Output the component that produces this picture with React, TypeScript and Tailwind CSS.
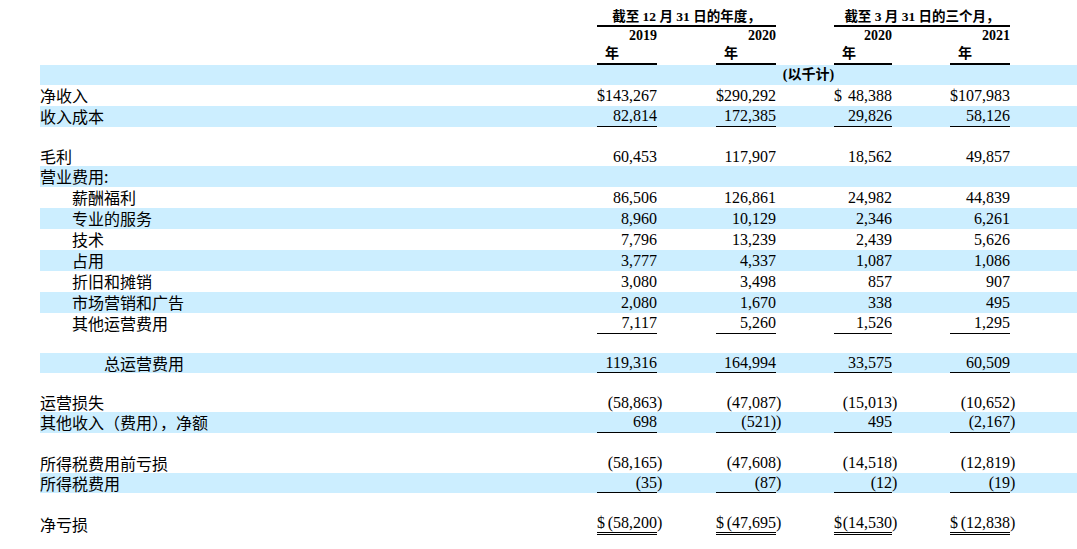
import React from 'react';

type Val = { v: string; d?: boolean; p?: string };

interface RowData {
  label?: string;
  indent?: 0 | 1 | 2;
  h: number;
  blue?: boolean;
  line?: 'single' | 'double';
  vals?: Val[];
}

const GRID = 'grid grid-cols-[557px_60px_59px_60px_58px_58px_58px_60px_10px]';
const SERIF = "font-['Liberation_Serif','Noto_Sans_CJK_SC',serif]";
const CJK = "font-['Noto_Sans_CJK_SC','Liberation_Sans',sans-serif]";

const n = (v: string, d?: boolean): Val =>
  v.endsWith(')') ? { v: v.slice(0, -1), p: ')', d } : { v, d };

const ROWS: RowData[] = [
  { label: '净收入', h: 21, vals: [n('143,267', true), n('290,292', true), n('48,388', true), n('107,983', true)] },
  { label: '收入成本', h: 21, blue: true, line: 'single', vals: [n('82,814'), n('172,385'), n('29,826'), n('58,126')] },
  { h: 20 },
  { label: '毛利', h: 19, vals: [n('60,453'), n('117,907'), n('18,562'), n('49,857')] },
  { label: '营业费用:', h: 21, blue: true },
  { label: '薪酬福利', indent: 1, h: 21, vals: [n('86,506'), n('126,861'), n('24,982'), n('44,839')] },
  { label: '专业的服务', indent: 1, h: 21, blue: true, vals: [n('8,960'), n('10,129'), n('2,346'), n('6,261')] },
  { label: '技术', indent: 1, h: 21, vals: [n('7,796'), n('13,239'), n('2,439'), n('5,626')] },
  { label: '占用', indent: 1, h: 21, blue: true, vals: [n('3,777'), n('4,337'), n('1,087'), n('1,086')] },
  { label: '折旧和摊销', indent: 1, h: 21, vals: [n('3,080'), n('3,498'), n('857'), n('907')] },
  { label: '市场营销和广告', indent: 1, h: 21, blue: true, vals: [n('2,080'), n('1,670'), n('338'), n('495')] },
  { label: '其他运营费用', indent: 1, h: 21, line: 'single', vals: [n('7,117'), n('5,260'), n('1,526'), n('1,295')] },
  { h: 19 },
  { label: '总运营费用', indent: 2, h: 20, blue: true, line: 'single', vals: [n('119,316'), n('164,994'), n('33,575'), n('60,509')] },
  { h: 20 },
  { label: '运营损失', h: 19, vals: [n('(58,863)'), n('(47,087)'), n('(15,013)'), n('(10,652)')] },
  { label: '其他收入（费用），净额', h: 21, blue: true, line: 'single', vals: [n('698'), n('(521))'), n('495'), n('(2,167)')] },
  { h: 20 },
  { label: '所得税费用前亏损', h: 20, vals: [n('(58,165)'), n('(47,608)'), n('(14,518)'), n('(12,819)')] },
  { label: '所得税费用', h: 20, blue: true, line: 'single', vals: [n('(35)'), n('(87)'), n('(12)'), n('(19)')] },
  { h: 20 },
  { label: '净亏损', h: 22, line: 'double', vals: [n('(58,200)', true), n('(47,695)', true), n('(14,530)', true), n('(12,838)', true)] },
];

function Row({ row }: { row: RowData }) {
  const lh = row.h - (row.line === 'double' ? 3 : row.line === 'single' ? 1 : 0);
  const pad = row.indent === 2 ? 'pl-16' : row.indent === 1 ? 'pl-8' : 'pl-0';
  return (
    <div className={`${GRID} ${row.blue ? 'bg-[#cceeff]' : 'bg-white'}`} style={{ height: row.h }}>
      <div className={`${CJK} ${pad} text-[16px] text-black whitespace-nowrap`} style={{ lineHeight: `${row.h}px` }}>
        {row.label}
      </div>
      {[0, 1, 2, 3].map((i) => {
        const val = row.vals?.[i];
        return (
          <React.Fragment key={i}>
            <div
              className={`${SERIF} flex justify-between text-[16px] text-black whitespace-nowrap ${
                val && row.line === 'single' ? 'border-b border-black' : ''
              } ${val && row.line === 'double' ? 'border-b-[3px] border-double border-black' : ''}`}
              style={{ lineHeight: `${lh}px` }}
            >
              <span>{val?.d ? '$' : ''}</span>
              <span>{val?.v}</span>
            </div>
            <div className={`${SERIF} text-[16px] text-black`} style={{ lineHeight: `${lh}px` }}>
              {val?.p}
            </div>
          </React.Fragment>
        );
      })}
    </div>
  );
}

export default function App() {
  return (
    <div className="w-[1077px] h-[549px] bg-white pl-10 overflow-hidden">
      {/* Column headings */}
      <div className={`${GRID} ${SERIF} font-bold text-black`}>
        <div className="h-[27px]" />
        <div className="col-span-3 h-[27px] border-b-2 border-black flex items-end justify-center text-[13.5px] leading-[17px] whitespace-nowrap">
          截至 12 月 31 日的年度，
        </div>
        <div className="h-[27px]" />
        <div className="col-span-3 h-[27px] border-b-2 border-black flex items-end justify-center text-[13.5px] leading-[17px] whitespace-nowrap">
          截至 3 月 31 日的三个月，
        </div>
        <div className="h-[27px]" />

        <div className="h-[18px]" />
        <div className="text-right text-[14px] leading-[18px]">2019</div>
        <div />
        <div className="text-right text-[14px] leading-[18px]">2020</div>
        <div />
        <div className="text-right text-[14px] leading-[18px]">2020</div>
        <div />
        <div className="text-right text-[14px] leading-[18px]">2021</div>
        <div />

        <div className="h-[20px]" />
        <div className="border-b-2 border-black pl-2 text-[14px] leading-[18px]">年</div>
        <div />
        <div className="border-b-2 border-black pl-2 text-[14px] leading-[18px]">年</div>
        <div />
        <div className="border-b-2 border-black pl-2 text-[14px] leading-[18px]">年</div>
        <div />
        <div className="border-b-2 border-black pl-2 text-[14px] leading-[18px]">年</div>
        <div />
      </div>

      {/* Units band */}
      <div className={`${GRID} bg-[#cceeff] h-[20px]`}>
        <div />
        <div className={`col-span-8 ${SERIF} font-bold text-center text-[14px] leading-[20px] text-black`}>(以千计)</div>
      </div>

      {ROWS.map((row, i) => (
        <Row key={i} row={row} />
      ))}
    </div>
  );
}
